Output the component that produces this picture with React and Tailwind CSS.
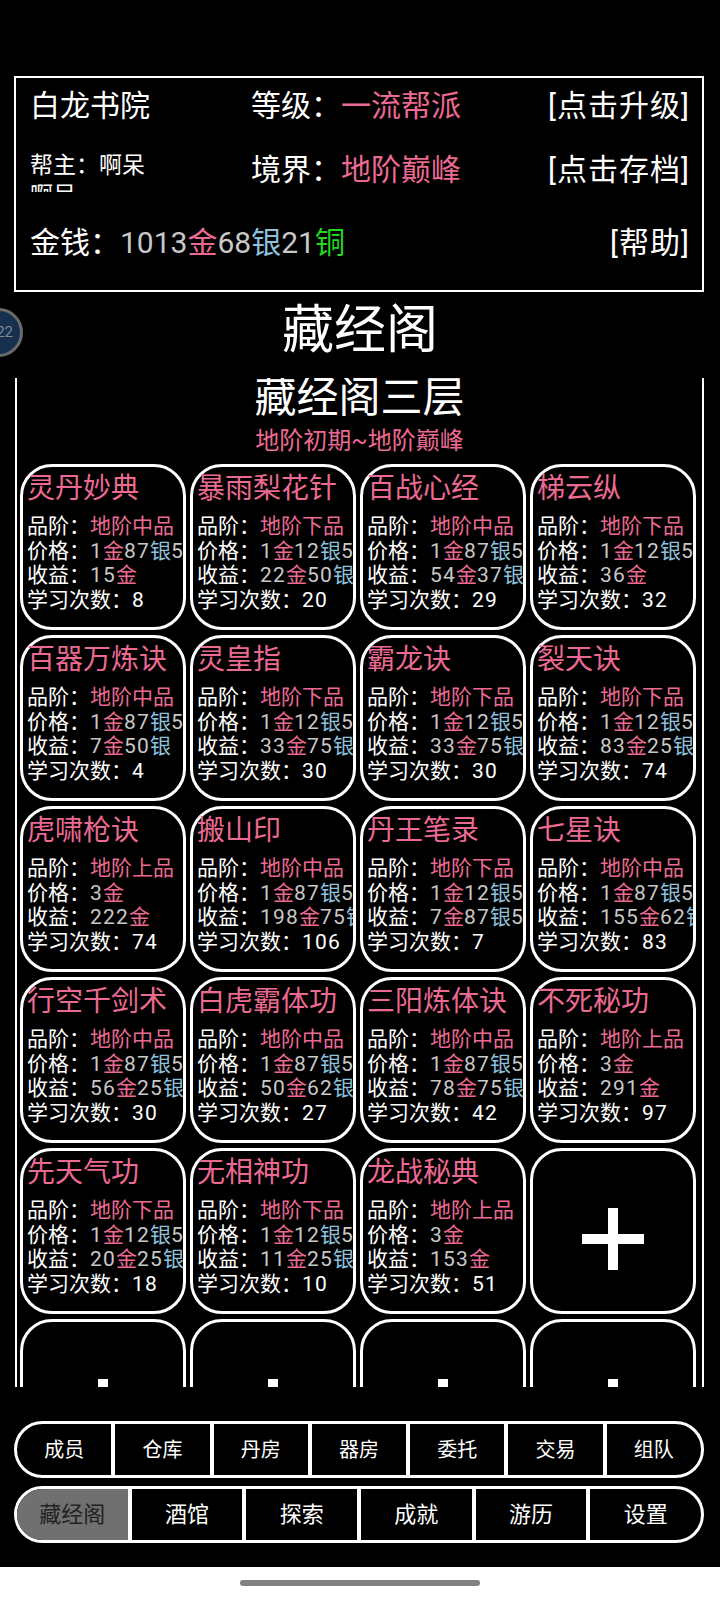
import React from "react";

const PINK = "text-[#ec6a92]";
const GRAY = "text-[#c8c8c8]";
const BLUE = "text-[#8cc2de]";

function Money({ text, wide }) {
  const parts = [];
  const re = /(\d+)|(金|银|铜)/g;
  let m;
  const dig = wide ? "tracking-[1.2px]" : "";
  while ((m = re.exec(text)) !== null) {
    if (m[1]) parts.push(<span key={parts.length} className={`${GRAY} ${dig}`}>{m[1]}</span>);
    else if (m[2] === "金") parts.push(<span key={parts.length} className={PINK}>金</span>);
    else if (m[2] === "银") parts.push(<span key={parts.length} className={BLUE}>银</span>);
    else parts.push(<span key={parts.length} className="text-[#22d822]">铜</span>);
  }
  return <>{parts}</>;
}

const cards = [
  ["灵丹妙典", "地阶中品", "1金87银50铜", "15金", "8"],
  ["暴雨梨花针", "地阶下品", "1金12银50铜", "22金50银", "20"],
  ["百战心经", "地阶中品", "1金87银50铜", "54金37银", "29"],
  ["梯云纵", "地阶下品", "1金12银50铜", "36金", "32"],
  ["百器万炼诀", "地阶中品", "1金87银50铜", "7金50银", "4"],
  ["灵皇指", "地阶下品", "1金12银50铜", "33金75银", "30"],
  ["霸龙诀", "地阶下品", "1金12银50铜", "33金75银", "30"],
  ["裂天诀", "地阶下品", "1金12银50铜", "83金25银", "74"],
  ["虎啸枪诀", "地阶上品", "3金", "222金", "74"],
  ["搬山印", "地阶中品", "1金87银50铜", "198金75银", "106"],
  ["丹王笔录", "地阶下品", "1金12银50铜", "7金87银50铜", "7"],
  ["七星诀", "地阶中品", "1金87银50铜", "155金62银", "83"],
  ["行空千剑术", "地阶中品", "1金87银50铜", "56金25银", "30"],
  ["白虎霸体功", "地阶中品", "1金87银50铜", "50金62银", "27"],
  ["三阳炼体诀", "地阶中品", "1金87银50铜", "78金75银", "42"],
  ["不死秘功", "地阶上品", "3金", "291金", "97"],
  ["先天气功", "地阶下品", "1金12银50铜", "20金25银", "18"],
  ["无相神功", "地阶下品", "1金12银50铜", "11金25银", "10"],
  ["龙战秘典", "地阶上品", "3金", "153金", "51"],
];

function Card({ c }) {
  return (
    <div className="h-[166px] rounded-[32px] border-[3px] border-white pl-[4px] pt-[4px]">
      <div className="h-full overflow-hidden whitespace-nowrap">
        <div className={`text-[28px] leading-[36px] ${PINK}`}>{c[0]}</div>
        <div className="mt-[7px] text-[21px] leading-[24.5px] text-white">
          <div>品阶：<span className={PINK}>{c[1]}</span></div>
          <div>价格：<Money text={c[2]} wide /></div>
          <div>收益：<Money text={c[3]} wide /></div>
          <div>学习次数：<span className="tracking-[1.2px]">{c[4]}</span></div>
        </div>
      </div>
    </div>
  );
}

function PlusCard() {
  return (
    <div className="h-[166px] rounded-[32px] border-[3px] border-white flex items-center justify-center pt-[16px]">
      <svg width="62" height="62" viewBox="0 0 62 62">
        <rect x="26" y="0" width="10" height="62" fill="white" />
        <rect x="0" y="26" width="62" height="10" fill="white" />
      </svg>
    </div>
  );
}

function EmptyCard() {
  return (
    <div className="h-[166px] rounded-[32px] border-[3px] border-white flex flex-col items-center pt-[57px]">
      <div className="w-[10px] h-[10px] bg-white" />
    </div>
  );
}

const rowA = ["成员", "仓库", "丹房", "器房", "委托", "交易", "组队"];
const rowB = ["藏经阁", "酒馆", "探索", "成就", "游历", "设置"];

export default function App() {
  return (
    <div className="relative w-[720px] h-[1600px] overflow-hidden bg-black font-['Roboto','Noto_Sans_CJK_SC',sans-serif] text-white">
      <div className="h-[1567px] pt-[76px]">
        {/* header box */}
        <div className="ml-[14px] w-[690px] h-[216px] border-2 border-white flex flex-col pl-[14px] pr-[12px]">
          <div className="h-[56px] flex items-center text-[30px] leading-[36px] whitespace-nowrap">
            <div className="w-[221px]">白龙书院</div>
            <div className="flex-1">等级：<span className={PINK}>一流帮派</span></div>
            <div className="tracking-[1px]">[点击升级]</div>
          </div>
          <div className="h-[72px] flex items-center text-[30px] leading-[36px] whitespace-nowrap">
            <div className="w-[221px] self-start mt-[17px] h-[41px] overflow-hidden text-[23px] leading-[30px]">
              帮主：啊呆
              <br />
              啊呆
            </div>
            <div className="flex-1">境界：<span className={PINK}>地阶巅峰</span></div>
            <div className="tracking-[1px]">[点击存档]</div>
          </div>
          <div className="h-[74px] flex items-center text-[30px] leading-[36px] whitespace-nowrap">
            <div className="flex-1">金钱：<Money text="1013金68银21铜" /></div>
            <div className="tracking-[1px]">[帮助]</div>
          </div>
        </div>

        {/* title */}
        <div className="h-[86px] text-center text-[52px] leading-[78px]">藏经阁</div>

        {/* panel */}
        <div className="ml-[15px] mr-[16px] h-[1009px] border-x-2 border-white overflow-hidden">
          <div className="text-center text-[42px] leading-[40px]">藏经阁三层</div>
          <div className={`mt-[10px] text-center text-[24px] leading-[27px] ${PINK}`}>地阶初期~地阶巅峰</div>
          <div className="mt-[9px] ml-[3px] grid grid-cols-[repeat(4,166px)] gap-x-[4px] gap-y-[5px]">
            {cards.map((c, i) => (
              <Card key={i} c={c} />
            ))}
            <PlusCard />
            <EmptyCard />
            <EmptyCard />
            <EmptyCard />
            <EmptyCard />
          </div>
        </div>

        {/* bottom nav */}
        <div className="mt-[34px] ml-[14px] w-[690px] h-[57px] rounded-full border-[3px] border-white overflow-hidden flex">
          {rowA.map((t, i) => (
            <div
              key={t}
              className={`flex-1 flex items-center justify-center text-[20px] ${i > 0 ? "border-l-[4px] border-white" : ""}`}
            >
              {t}
            </div>
          ))}
        </div>
        <div className="mt-[8px] ml-[14px] w-[690px] h-[57px] rounded-full border-[3px] border-white overflow-hidden flex">
          {rowB.map((t, i) => (
            <div
              key={t}
              className={`flex-1 flex items-center justify-center text-[22px] ${i > 0 ? "border-l-[4px] border-white" : "bg-[#707070] text-[#222222]"}`}
            >
              {t}
            </div>
          ))}
        </div>
      </div>
      <div className="h-[33px] bg-white pt-[13px]">
        <div className="mx-auto w-[240px] h-[6px] rounded-full bg-[#808080]" />
      </div>

      {/* floating bubble */}
      <div className="absolute left-[-26px] top-[308px] w-[49px] h-[49px] rounded-full border-[3px] border-[#6b6b6b] bg-[#163050] flex items-center justify-end pr-[7px] text-[15px] text-[#7d8794]">
        22
      </div>
    </div>
  );
}
